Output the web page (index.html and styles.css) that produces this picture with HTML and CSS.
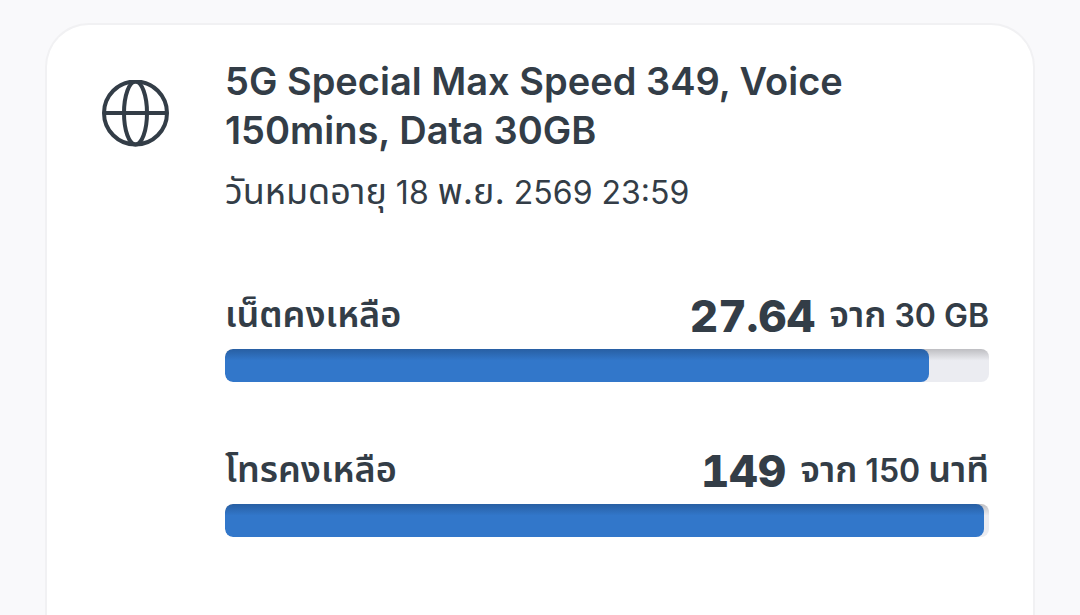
FILE: index.html
```html
<!DOCTYPE html>
<html lang="th">

<head>
    <meta charset="UTF-8">
    <meta name="viewport" content="width=device-width, initial-scale=1.0">
    <title>แพ็กเกจของฉัน</title>
    <link rel="stylesheet" href="styles.css">
</head>

<body>
    <main class="package-card">
        <svg class="package-icon" viewBox="0 0 68 68" aria-hidden="true">
            <circle cx="33.5" cy="33" r="31.5" />
            <ellipse cx="33.5" cy="33" rx="11.5" ry="31.5" />
            <path d="M2 33h63" />
        </svg>
        <div class="package-info">
            <h1 class="package-name">5G Special Max Speed 349, Voice 150mins, Data 30GB</h1>
            <p class="expire-date"><span class="thai">วันหมดอายุ</span> 18 <span class="thai">พ.ย.</span> 2569 23:59</p>

            <!-- Data -->
            <section class="usage">
                <div class="usage-text">
                    <h2 class="usage-label" id="data-label"><span class="thai">เน็ตคงเหลือ</span></h2>
                    <p class="usage-value"><strong>27.64</strong> <span><span class="thai">จาก</span> 30 GB</span></p>
                </div>
                <div class="bar" role="progressbar" aria-labelledby="data-label" aria-valuemin="0" aria-valuemax="30" aria-valuenow="27.64">
                    <div class="bar-fill" style="width: 92.13%"></div>
                </div>
            </section>

            <!-- Voice -->
            <section class="usage">
                <div class="usage-text">
                    <h2 class="usage-label" id="voice-label"><span class="thai">โทรคงเหลือ</span></h2>
                    <p class="usage-value"><strong>149</strong> <span><span class="thai">จาก</span> 150 <span class="thai">นาที</span></span></p>
                </div>
                <div class="bar" role="progressbar" aria-labelledby="voice-label" aria-valuemin="0" aria-valuemax="150" aria-valuenow="149">
                    <div class="bar-fill" style="width: 99.33%"></div>
                </div>
            </section>
        </div>
    </main>
</body>

</html>
```

FILE: styles.css
```css
* {
    box-sizing: border-box;
}

body {
    margin: 0;
    padding: 23px 45px 0;
    background: #f9f9fb;
    color: #333d47;
    font-family: Inter, "Noto Sans Thai", "Noto Sans", sans-serif;
}

h1,
h2,
p {
    margin: 0;
}

.package-card {
    display: flex;
    align-items: flex-start;
    min-height: calc(100vh - 23px);
    padding: 32px 44px 48px 55px;
    background: #fff;
    border: 2px solid #f1f1f3;
    border-bottom: 0;
    border-radius: 44px 44px 0 0;
}

.package-icon {
    flex: none;
    width: 68px;
    height: 68px;
    margin: 23px 55px 0 0;
    fill: none;
    stroke: #333d47;
    stroke-width: 4;
}

.package-info {
    flex: 1;
}

.package-name {
    font-size: 38px;
    font-weight: 600;
    line-height: 49px;
}

/* Thai letters are drawn smaller than the Latin ones */
.thai {
    font-size: 36px;
    line-height: 1;
}

.expire-date {
    margin: 12px 0 8px;
    font-size: 32px;
    line-height: 52px;
}

.usage {
    padding-top: 56px;
}

.usage-text {
    display: flex;
    justify-content: space-between;
    align-items: center;
}

.usage-label,
.usage-value {
    font-size: 32px;
    font-weight: 600;
    line-height: 66px;
}

.usage-value {
    display: flex;
    align-items: center;
    gap: 14px;
}

.usage-value strong {
    font-size: 44px;
    font-weight: 800;
    font-variant-numeric: tabular-nums;
}

.bar {
    height: 33px;
    overflow: hidden;
    background: linear-gradient(#bebec2, #ebecf1 35%);
    border-radius: 8px;
}

.bar-fill {
    height: 100%;
    background: linear-gradient(#285fa3, #3277ca 35%);
    border-radius: 8px;
}
```
